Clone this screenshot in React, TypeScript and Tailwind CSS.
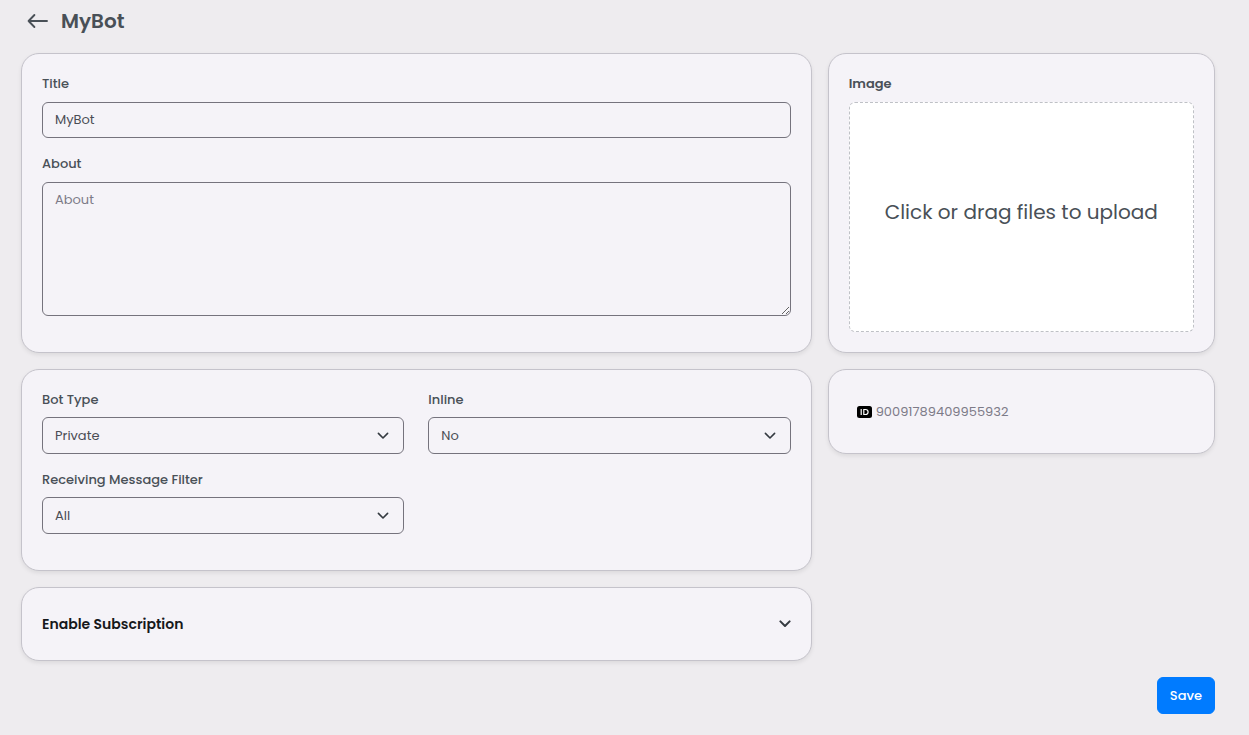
import { useState, type ReactNode } from "react";

const field =
  "block w-full rounded-md border border-[#75737d] bg-transparent px-3 text-[13px] leading-5 text-[#4a4d55] outline-none focus:border-[#007bff]";

function Card({ children, className = "p-5" }: { children: ReactNode; className?: string }) {
  return (
    <section
      className={`rounded-[18px] border border-[#c5c3cb] bg-[#f5f3f8] shadow-[0_2px_4px_rgba(0,0,0,0.08)] ${className}`}
    >
      {children}
    </section>
  );
}

function Label({ htmlFor, children, className = "mb-2" }: { htmlFor: string; children: ReactNode; className?: string }) {
  return (
    <label htmlFor={htmlFor} className={`block text-[13px] leading-5 font-medium text-[#495057] ${className}`}>
      {children}
    </label>
  );
}

function Chevron({ className }: { className: string }) {
  return (
    <svg viewBox="0 0 12 12" className={className} fill="none" stroke="currentColor" strokeLinecap="round" strokeLinejoin="round" aria-hidden="true">
      <path d="M1.4 3.4 6 8l4.6-4.6" />
    </svg>
  );
}

function SelectField({ id, label, options }: { id: string; label: string; options: string[] }) {
  return (
    <div>
      <Label htmlFor={id} className="mb-[7px]">{label}</Label>
      <div className="grid items-center">
        <select id={id} className={`${field} col-start-1 row-start-1 h-[37px] appearance-none pr-9`}>
          {options.map((option) => (
            <option key={option}>{option}</option>
          ))}
        </select>
        <Chevron className="pointer-events-none col-start-1 row-start-1 mr-[15px] size-3 justify-self-end stroke-[1.6] text-[#343a40]" />
      </div>
    </div>
  );
}

export default function App() {
  const [title, setTitle] = useState("MyBot");
  const [about, setAbout] = useState("");

  return (
    <div className="min-h-screen bg-[#eeecef] pr-[26px] pb-5 pl-[13px] font-['Poppins','Inter',sans-serif] text-[#495057]">
      <header className="flex h-[53px] items-start gap-3 px-3.5 pt-[7px]">
        <a href="#bots" aria-label="Back" className="flex h-7 items-center">
          <svg viewBox="0 0 22 16" className="h-4 w-[22px]" fill="none" stroke="currentColor" strokeWidth="1.9" strokeLinecap="round" strokeLinejoin="round" aria-hidden="true">
            <path d="M20 8H1.6M7.4 2 1.6 8l5.8 6" />
          </svg>
        </a>
        <h1 className="text-xl leading-7 font-semibold">MyBot</h1>
      </header>

      <main>
        <div className="flex items-start">
          <div className="flex w-2/3 flex-col gap-4 px-2">
            <Card>
              <div className="mb-4">
                <Label htmlFor="title">Title</Label>
                <input id="title" type="text" value={title} onChange={(e) => setTitle(e.target.value)} className={`${field} h-9`} />
              </div>
              <div className="mb-4">
                <Label htmlFor="about">About</Label>
                <textarea
                  id="about"
                  placeholder="About"
                  value={about}
                  onChange={(e) => setAbout(e.target.value)}
                  className={`${field} h-[134px] resize-y py-[7px] placeholder:text-[#7d7b88]`}
                />
              </div>
            </Card>

            <Card>
              <div className="mb-4 grid grid-cols-2 gap-x-6 gap-y-4">
                <SelectField id="bot-type" label="Bot Type" options={["Private", "Public"]} />
                <SelectField id="inline" label="Inline" options={["No", "Yes"]} />
                <SelectField id="filter" label="Receiving Message Filter" options={["All", "Commands"]} />
              </div>
            </Card>

            <Card className="">
              <button type="button" aria-expanded="false" className="flex h-[72px] w-full items-center justify-between px-5 text-left text-sm leading-5 font-semibold text-[#16181b]">
                Enable Subscription
                <Chevron className="size-3 stroke-2 text-[#343a40]" />
              </button>
            </Card>
          </div>

          <div className="flex w-1/3 flex-col gap-4 px-2">
            <Card>
              <h2 className="mb-2 text-[13px] leading-5 font-semibold">Image</h2>
              <label htmlFor="image" className="flex h-[230px] cursor-pointer items-center justify-center rounded-md border border-dashed border-[#bfc1c6] bg-white px-4 pb-2.5 text-center text-xl leading-7">
                Click or drag files to upload
                <input id="image" type="file" accept="image/*" className="sr-only" />
              </label>
            </Card>

            <Card className="flex h-[85px] items-center px-7">
              <p className="flex items-center gap-1 text-[13px] leading-5 text-[#7d7b88]">
                <svg viewBox="0 0 15 12" className="h-3 w-[15px]" aria-hidden="true">
                  <rect width="15" height="12" rx="2.5" fill="#000" />
                  <g fill="none" stroke="#fff" strokeWidth="1.2">
                    <path d="M4.2 3v6M6.8 3.5h1.6c1.7 0 2.7 1 2.7 2.5s-1 2.5-2.7 2.5H6.8z" />
                  </g>
                </svg>
                90091789409955932
              </p>
            </Card>
          </div>
        </div>

        <div className="mt-4 flex justify-end px-2">
          <button type="button" className="h-[37px] rounded-md border border-[#007bff] bg-[#007bff] px-3 text-[13px] leading-5 font-medium text-white hover:bg-[#006fe6]">
            Save
          </button>
        </div>
      </main>
    </div>
  );
}
